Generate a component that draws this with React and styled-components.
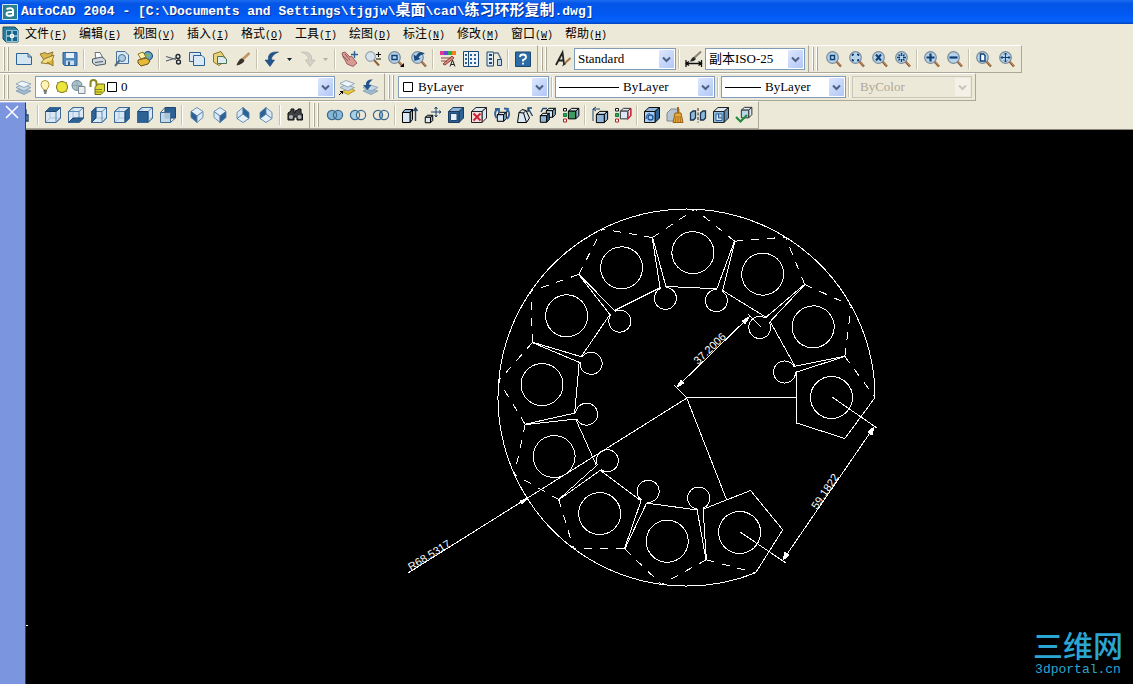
import React from 'react'
import styled, { createGlobalStyle } from 'styled-components'

const GlobalStyle = createGlobalStyle`
* {
    box-sizing: border-box;
}
body {
    margin: 0;
    background: #000;
    overflow: hidden;
}
`

const mono = `"Liberation Mono", "Noto Sans CJK SC", monospace`
const serif = `"Liberation Serif", "Noto Sans CJK SC", serif`

const Container = styled.div`
position: relative;
display: flex;
flex-direction: column;
min-height: 100vh;
background: #ece9d8;
`

const TitleBar = styled.header`
height: 24px;
padding: 0 2px;
display: flex;
align-items: center;
gap: 3px;
background: linear-gradient(#1b6cf0 0%, #0355e6 15%, #0258f2 60%, #0463fb 88%, #0342bd 100%);
`

const Title = styled.h1`
margin: 0;
color: #fff;
font: bold 13px/20px ${mono};
white-space: pre;
text-shadow: 1px 1px 0 #0a2f8c;
`

const Han = styled.span`
font-size: 15px;
line-height: 20px;
`

const MenuBar = styled.nav`
height: 21px;
padding-left: 2px;
display: flex;
align-items: center;
gap: 6px;
`

const MenuList = styled.ul`
margin: 0;
padding: 0;
display: flex;
list-style: none;
`

const MenuItem = styled.li`
width: 54px;
`

const MenuButton = styled.button`
padding: 0;
border: none;
background: none;
color: #000;
font: 12px/18px ${mono};
white-space: nowrap;
`

const Accel = styled.span`
font-size: 10px;
`

const Row = styled.div`
height: 28px;
display: flex;
`

const Toolbar = styled.div`
display: flex;
align-items: center;
padding-right: 3px;
border-top: 1px solid #fff;
border-right: 1px solid #aca899;
border-bottom: 1px solid #aca899;
`

const Grip = styled.span`
width: ${p => p.$first ? 12 : 13}px;
height: 24px;
flex: none;
background:
    linear-gradient(90deg, #fff 1px, #aca899 1px) 3px 0 / 2px 24px no-repeat,
    linear-gradient(90deg, #fff 1px, #aca899 1px) 7px 0 / 2px 24px no-repeat;
`

const Sep = styled.span`
width: 6px;
height: 20px;
flex: none;
background: linear-gradient(90deg, #c5c2b2 1px, #fff 1px) 2px 0 / 2px 20px no-repeat;
`

const ToolButton = styled.button`
width: 23px;
height: 24px;
flex: none;
padding: 0;
border: none;
background: none;
display: flex;
align-items: center;
justify-content: center;
svg {
    display: block;
    overflow: visible;
}
`

const DropButton = styled(ToolButton)`
width: 13px;
`

const ComboBox = styled.label`
width: ${p => p.$width}px;
height: 22px;
flex: none;
display: flex;
align-items: center;
padding: 0 1px 0 3px;
border: 1px solid ${p => p.$off ? '#c9c7ba' : '#7f9db9'};
background: ${p => p.$off ? '#ece9d8' : '#fff'};
svg {
    flex: none;
}
`

const Select = styled.select`
flex: 1;
min-width: 0;
height: 18px;
padding: 0 0 0 ${p => p.$indent || 0}px;
border: none;
outline: none;
appearance: none;
background: transparent;
color: #000;
opacity: 1;
font: 13px/18px ${serif};
&:disabled {
    color: #aca899;
}
`

const Arrow = styled.span`
width: 15px;
height: 18px;
flex: none;
display: flex;
align-items: center;
justify-content: center;
border-radius: 1px;
background: ${p => p.$off ? '#f3f1e8' : 'linear-gradient(135deg, #dde8ff, #b2c6f6)'};
`

const Palette = styled.aside`
position: absolute;
left: 0;
top: 102px;
bottom: 0;
width: 26px;
background: #7b96df;
border-top: 1px solid #a9baf0;
border-right: 1px solid #3a3f52;
`

const CloseButton = styled.button`
display: block;
width: 20px;
height: 20px;
padding: 0 0 0 3px;
border: none;
background: none;
`

const Canvas = styled.main`
flex: 1;
margin-left: 26px;
border-top: 1px solid #8b897c;
position: relative;
display: flex;
background: #000;
`

const Drawing = styled.svg`
display: block;
width: 100%;
flex: 1;
fill: none;
stroke: #fff;
text {
    fill: #fff;
    stroke: none;
    font: 11px "Liberation Sans", sans-serif;
}
`

const Watermark = styled.div`
position: absolute;
right: 10px;
bottom: 7px;
color: #2ba6d3;
text-align: center;
`

const MarkName = styled.div`
font: 500 30px/38px "Noto Sans CJK SC", sans-serif;
`

const MarkSite = styled.div`
font: 13px/14px ${mono};
`

const navy = '#1d4670'
const dark = '#2d6296'
const pale = '#d9e8f4'
const mid = '#8fb6d8'

// small box used by the solids and view tools
const Cube = ({ top = pale, front = pale, side = mid, stroke = navy, x = 0, y = 0, s = 1 }) => (
    <g transform={`translate(${x} ${y}) scale(${s})`} stroke={stroke} strokeWidth={1 / s} strokeLinejoin="round">
        <path d="M.5 4.5L5 .5H15.5L11 4.5Z" fill={top} />
        <path d="M11 4.5L15.5 .5V11L11 15.5Z" fill={side} />
        <path d="M.5 4.5H11V15.5H.5Z" fill={front} />
    </g>
)

// view cube with faint hidden edges
const ViewCube = ({ face }) => (
    <g stroke="#5f8ab0" strokeLinejoin="round">
        <path d="M.5 4.5L5 .5H15.5V11L11 15.5H.5Z" fill={pale} />
        <path d="M5 .5V11H15.5M5 11L.5 15.500" stroke="#a9c6dd" />
        <path d="M.5 4.5H11V15.5M11 4.500L15.500 .5" />
        <path d={face} fill={dark} stroke={navy} />
        <path d="M.5 4.5L5 .5H15.5V11L11 15.5H.5Z" stroke="#3d6b96" />
    </g>
)

const Iso = ({ left = pale, right = pale, flip }) => (
    <g stroke="#4d7aa3" strokeWidth=".8" strokeLinejoin="round" transform={flip ? 'matrix(1 0 0 -1 0 16)' : undefined}>
        <path d="M8 .5L14 4.500L8 9L2 4.500Z" fill="#e6f0f8" />
        <path d="M2 4.500L8 9V15.500L2 10.500Z" fill={left} />
        <path d="M14 4.500L8 9V15.500L14 10.500Z" fill={right} />
    </g>
)

const Mag = ({ children }) => (
    <>
        <path d="M10.5 10.5L15 15.5" stroke="#8d5a33" strokeWidth="2.4" />
        <path d="M11 10.5L15 14.8" stroke="#e2b27c" strokeWidth=".8" />
        <circle cx="6.5" cy="6.5" r="5.8" fill="#b5d3ea" stroke="#7d8b99" strokeWidth="1.2" />
        <g fill="none" stroke="#123f73" strokeWidth="1.4">{children}</g>
    </>
)

const Rings = ({ a, b, lens }) => (
    <>
        <circle cx="5" cy="8" r="4.6" fill={a} />
        <circle cx="11" cy="8" r="4.6" fill={b} />
        <path d="M8 4.4A4.6 4.6 0 0 1 8 11.6A4.6 4.6 0 0 1 8 4.4Z" fill={lens} />
        <g fill="none" stroke="#3d6b8f" strokeWidth="1.2">
            <circle cx="5" cy="8" r="4.6" />
            <circle cx="11" cy="8" r="4.6" />
        </g>
    </>
)

const Sheets = () => (
    <g stroke="#7e98b0" strokeWidth=".8">
        <path d="M0 12L6 9L15 12L8 15.5Z" fill="#9eb9d0" />
        <path d="M0 8.500L6 5.500L15 8.500L8 12Z" fill="#c6d8e6" />
        <path d="M0 5L6 2L15 5L8 8.500Z" fill="#eef4f8" />
    </g>
)

const icons = {
    New: <path d="M.5 2.500H12L15.500 6V13.500H.5Z M12 2.500V6H15.500" fill="#d5e6f3" stroke={dark} />,
    Open: <>
        <path d="M1 3L6 1.500L8 3L14 1L12 6L5 9Z" fill="#d9b84e" stroke="#7d6118" strokeWidth=".8" />
        <path d="M5 8L15 4L12 13L2 12Z" fill="#f3dc82" stroke="#7d6118" strokeWidth=".8" />
        <path d="M8 11L14 15L14 9" fill="#dcb63c" stroke="#7d6118" strokeWidth=".8" />
    </>,
    Save: <>
        <path d="M1 1.500H15V14.500H2.500L1 13Z" fill="#4f86bb" stroke={dark} />
        <path d="M4 2H12V7H4Z" fill="#e5f0f8" />
        <path d="M4 9.500H12V14H4Z" fill="#cddfee" /><path d="M6 10.500H8V14H6Z" fill={dark} />
    </>,
    Plot: <>
        <path d="M4 1.500H9L12 7L5 8Z" fill="#fff" stroke="#66717d" />
        <path d="M1.500 8L11 6L14.500 9V13L5 14.500L1.500 12Z" fill="#cfd6dd" stroke="#4e5a66" />
        <path d="M4 11.500L12 10.500" stroke="#4e5a66" />
    </>,
    Preview: <>
        <path d="M2.500 .5H11L14.500 4V12.500H2.500Z" fill="#dbe9f4" stroke="#4a7096" />
        <circle cx="8" cy="7" r="3.500" fill="#aecde4" stroke="#4a7096" />
        <path d="M5.500 9.500L1 15" stroke="#566b7e" strokeWidth="2" />
    </>,
    Publish: <>
        <circle cx="11" cy="5" r="4.500" fill="#5d9ccc" stroke={navy} /><path d="M8 4Q11 1 14 4L11 7Z" fill="#7cb56e" />
        <path d="M1 3L6 1L9 6L4 8Z" fill="#fff3a9" stroke="#8c7420" />
        <path d="M1 9L9 7L13 10L11 13L4 15L1 12Z" fill="#e4b93a" stroke="#6e5614" />
    </>,
    Cut: <>
        <path d="M0 5.500L10 8.500M0 10L10 7" stroke="#57626e" strokeWidth="1.300" />
        <g fill="none" stroke="#20262d" strokeWidth="1.300"><circle cx="12" cy="5.500" r="2" /><circle cx="12.500" cy="11" r="2" /></g>
    </>,
    Copy: <g fill="#dbe9f4" stroke={dark}>
        <path d="M.5 1.500H11.500V10.500H.5Z" /><path d="M4.500 4.500H13L15.500 7V14.500H4.500Z" />
    </g>,
    Paste: <>
        <path d="M1.500 3L9 .5L14.500 9L7 14.500L1.500 11Z" fill="#e8d37b" stroke="#8a7428" />
        <path d="M5.500 5.500H11L14.500 8V12.500H5.500Z" fill="#dceaf2" stroke="#4d7551" />
    </>,
    Match: <>
        <path d="M8 8L14.500 2" stroke="#c29560" strokeWidth="2.600" />
        <path d="M1.500 14.500Q3 9 7 7L9.500 9.500Q8 13 1.500 14.500Z" fill="#3a3028" />
    </>,
    Undo: <path d="M14.500 1Q3 0 4.500 9H1L6 15.500L10.500 9H7.500Q7 4 14.500 1Z" fill="#23548c" stroke={navy} strokeWidth=".6" />,
    Redo: <path d="M1.500 1Q13 0 11.500 9H15L10 15.500L5.500 9H8.500Q9 4 1.500 1Z" fill="#d4d2c8" stroke="#b3b1a6" strokeWidth=".6" />,
    Pan: <>
        <path d="M0 2L3 1L8 6L9.500 5L15 12L11 15.500L5 13L3 9L1 6Z" fill="#d79a94" stroke="#854a48" strokeWidth=".8" />
        <path d="M3 3L8 9M1 5L6 10" stroke="#854a48" strokeWidth=".8" />
        <path d="M12.500 0V7M9 3.500H16" stroke={dark} strokeWidth="1.400" />
    </>,
    Realtime: <>
        <path d="M9 9L14 14.500" stroke="#8d6238" strokeWidth="2" />
        <circle cx="5.500" cy="5.500" r="4.800" fill="#d6e3ec" stroke="#7d8b99" />
        <path d="M13.500 1V6M11 3.500H16M11 8H16" stroke="#111" />
    </>,
    Window: <>
        <Mag><path d="M4 4.500H9V8.500H4Z" /></Mag>
        <path d="M16 12V16H12Z" fill="#000" />
    </>,
    Previous: <>
        <Mag />
        <path d="M14 3Q9 -2 5 5L2.500 3.500L3.500 10L9.500 8L7.500 6.500Q9.500 3 14 3Z" fill="#1c4a80" />
    </>,
    Properties: <>
        <path d="M0 0H4V4H0Z" fill="#e03a8c" /><path d="M4 0H8V4H4Z" fill="#6a45d8" /><path d="M8 0H12V4H8Z" fill="#25b24a" /><path d="M12 0H16V4H12Z" fill="#f08020" />
        <path d="M1 7H11M1 10H7M3 13L12 5L14 7L5 14Z" stroke="#904038" fill="#d88c84" />
        <path d="M10 15.500L12.500 9L15 15.500M11 13.500H14" fill="none" stroke="#222" />
    </>,
    Center: <>
        <path d="M.5 .5H15.500V15.500H.5Z" fill="#edf4f9" stroke={navy} />
        <path d="M5.500 1V15" stroke={navy} />
        <path d="M2 3H4V5H2ZM2 7H4V9H2ZM2 11H4V13H2ZM7 3H9V5H7ZM11 3H13V5H11ZM7 7H9V9H7ZM11 7H13V9H11ZM7 11H9V13H7ZM11 11H13V13H11Z" fill={dark} />
    </>,
    Palettes: <>
        <path d="M1 1H7.500V15H1Z" fill="#dfebf4" stroke={navy} /><path d="M3 4H6M3 8H6M3 12H6" stroke={navy} strokeWidth="2" />
        <path d="M7 2H12L15 8" fill="none" stroke="#5c7791" strokeWidth="1.500" /><path d="M11.500 8.500H15.500V14.500H11.500Z" fill="#bdd6ea" stroke={navy} />
    </>,
    Help: <>
        <path d="M.5 1H15.500V15.500H.5Z" fill="#2d6ba6" stroke={navy} />
        <path d="M5 6Q5 3.500 8 3.500Q11 3.500 11 6Q11 8 8 9V10.500M8 11.800V13.500" fill="none" stroke="#fff" strokeWidth="1.800" />
    </>,
    TextStyle: <>
        <path d="M1 14L7.500 1.500L9 13M3.500 9.500H8.500" fill="none" stroke="#222" strokeWidth="1.800" />
        <path d="M9 13L15.500 7" stroke="#a5743d" strokeWidth="2" /><path d="M7 15.500L9 11.500L11 13Z" fill="#222" />
    </>,
    DimStyle: <>
        <path d="M0 9V16M15.500 9V16M1 12.500H15M3 10.500L0 12.500L3 14.500M12.500 10.500L15.500 12.500L12.500 14.500" fill="none" stroke="#111" strokeWidth="1.300" />
        <path d="M7 8L15 .5" stroke="#8a8576" strokeWidth="2" /><path d="M4 10.500Q6 6 8 6L10 8Q8 11 4 10.500Z" fill="#2b2b2b" />
    </>,
    ZoomWindow: <Mag><path d="M4.500 4.500H8.500V8.500H4.500Z" /></Mag>,
    ZoomDynamic: <Mag><path d="M3.500 5V3.500H5M8 3.500H9.500V5M9.500 8V9.500H8M5 9.500H3.500V8" /></Mag>,
    ZoomScale: <Mag><path d="M4 3.500L9 9.500M9 3.500L4 9.500" strokeWidth="2" /></Mag>,
    ZoomCenter: <Mag><path d="M6.500 2V5M6.500 8V11M2 6.500H5M8 6.500H11M3.500 3.500L5 5M9.500 9.500L8 8M9.500 3.500L8 5M3.500 9.500L5 8" /></Mag>,
    ZoomIn: <Mag><path d="M6.500 2.500V10.500M2.500 6.500H10.500" strokeWidth="2.200" /></Mag>,
    ZoomOut: <Mag><path d="M2.500 6.500H10.500" strokeWidth="2.200" /></Mag>,
    ZoomAll: <Mag><path d="M4.500 3H7.500L9 4.500V10H4.500Z" fill="#fff" /></Mag>,
    ZoomExtents: <Mag><path d="M6.500 2V11M2 6.500H11M5 3.500L6.500 2L8 3.500M5 9.500L6.500 11L8 9.500M3.500 5L2 6.500L3.500 8M9.500 5L11 6.500L9.500 8" strokeWidth="1" /></Mag>,
    Layers: <Sheets />,
    LayerCurrent: <>
        <path d="M3 12.500L11 9L16 11.500L9 15.500Z" fill="#edc83a" stroke="#a08420" strokeWidth=".8" />
        <g stroke="#7e98b0" strokeWidth=".8">
            <path d="M1 8.500L7 5.500L15.500 8.500L9 12Z" fill="#c6d8e6" />
            <path d="M1 4.500L7 1.500L15.500 4.500L9 8Z" fill="#eef4f8" />
        </g>
        <path d="M0 16L3.500 12.500M1 12.500H3.500V15" fill="none" stroke="#000" />
    </>,
    LayerPrevious: <>
        <path d="M1 12L7 9L16 12L9 15.500Z" fill="#9eb9d0" stroke="#7e98b0" strokeWidth=".8" />
        <path d="M1 8.500L7 5.500L16 8.500L9 12Z" fill="#c6d8e6" stroke="#7e98b0" strokeWidth=".8" />
        <path d="M11 .5Q3.500 0 4 6H1L5.500 11L9.500 6H7Q7 3 11 .5Z" fill="#23548c" />
    </>,
    Named: <path d="M1 3H10V13H1ZM3 8H12V14H3Z" fill="#a9cbe2" stroke={navy} strokeWidth="1.400" />,
    Top: <ViewCube face="M.5 4.500L5 .5H15.500L11 4.500Z" />,
    Bottom: <ViewCube face="M.5 15.500L5 11H15.500L11 15.500Z" />,
    Left: <ViewCube face="M.5 4.500L5 .5V11L.5 15.500Z" />,
    Right: <ViewCube face="M11 4.500L15.500 .5V11L11 15.500Z" />,
    Front: <ViewCube face="M.5 4.500H11V15.500H.5Z" />,
    Back: <>
        <path d="M5 .5H15.500V11H5Z" fill={dark} stroke={navy} />
        <path d="M.5 5.500H10.500V15.500H.5Z" fill="#bdd5e9" fillOpacity=".85" stroke="#456c93" />
        <path d="M.5 5.500L5 .5M10.500 15.500L15.500 11" stroke="#456c93" />
    </>,
    SW: <Iso left={dark} />,
    SE: <Iso right={dark} />,
    NE: <Iso right={dark} flip />,
    NW: <Iso left={dark} flip />,
    Camera: <>
        <path d="M1 12V6L4 4V2H7V6H8V4L11 3V2H14V6L15.500 7V13H10V10H7V13H1Z" fill="#3f4144" stroke="#111" />
        <circle cx="4" cy="10" r="2" fill="#aeb4b9" /><circle cx="12.500" cy="10" r="2" fill="#aeb4b9" />
    </>,
    Union: <Rings a="#86b8d6" b="#86b8d6" lens="#86b8d6" />,
    Subtract: <Rings a="#a9cfe3" b="none" lens="#ece9d8" />,
    Intersect: <Rings a="none" b="none" lens="#86b8d6" />,
    Extrude: <>
        <path d="M.5 5.500L3 2.500H10.500L8 5.500ZM8 5.500L10.500 2.500V12.500L8 15.500Z" fill={mid} stroke="#000" />
        <path d="M.5 5.500H8V15.500H.5Z" fill={pale} stroke="#000" />
        <path d="M13.500 14V2M11.500 4L13.500 1L15.500 4" fill="none" stroke={navy} strokeWidth="1.400" />
    </>,
    MoveFaces: <>
        <Cube stroke="#000" y={8} s={.5} /><path d="M11 0V10M6 5H16M9.500 2L11 0L12.500 2M9.500 8L11 10L12.500 8M14 3.500L16 5L14 6.500" fill="none" stroke={navy} />
    </>,
    Offset: <><Cube stroke="#1d3a5c" top={mid} front={dark} side={dark} /><path d="M2.500 6.500H9V13.500H2.500Z" fill="#e6f0f8" stroke={navy} /></>,
    Delete: <><Cube stroke="#222" front="#f2dede" side={pale} /><path d="M2.500 6.500L9.500 13.500M9.500 6.500L2.500 13.500" stroke="#cc2233" strokeWidth="2" /></>,
    Rotate: <>
        <Cube stroke="#000" x={3} y={5} s={.6} />
        <path d="M2.500 11Q-1 5 4 2M13 2Q17.500 7 13 12M1 2H5V6M10 1.500L14 2L12.500 5" fill="none" stroke={dark} strokeWidth="1.800" />
    </>,
    Taper: <>
        <path d="M.5 15.500L2 5.500L5 2.500L9 3.500L12.500 11L9.500 15.500ZM2 5.500L6.500 6L9.500 15.500M6.500 6L9 3.500" fill={pale} stroke="#000" />
        <path d="M11 1L15.500 9M11 5V1H15" fill="none" stroke={navy} strokeWidth="1.400" />
    </>,
    CopyFaces: <>
        <Cube stroke="#000" x={6} y={1} s={.6} /><Cube stroke="#000" front={mid} side={dark} y={6} s={.6} />
        <path d="M1 5L3 1.500H7" fill="none" stroke={navy} strokeWidth="1.400" />
    </>,
    ColorFaces: <>
        <Cube stroke="#000" front="#3f9a62" x={5} y={1} s={.7} />
        <path d="M.5 1.500H3.500V4H.5Z" fill="#fff" stroke="#111" /><path d="M.5 6.500H3.500V9.500H.5Z" fill="#3a3" stroke="#174" /><path d="M.5 12H3.500V15H.5Z" fill="#fff" stroke="#a22" />
    </>,
    CopyEdges: <><Cube stroke="#000" front={mid} x={4} y={4} s={.75} /><path d="M1 14V2M1 2H8M4 0L1 2L4 4" fill="none" stroke={navy} /></>,
    ColorEdges: <>
        <Cube stroke="#333" x={5} y={1} s={.7} side={pale} /><path d="M12.800 4.500V12L15.800 8.500V1.500" stroke="#d23" strokeWidth="1.200" fill="none" />
        <path d="M.5 1.500H3.500V4H.5Z" fill="#fff" stroke="#111" /><path d="M.5 6.500H3.500V9.500H.5Z" fill="#3a3" stroke="#174" /><path d="M.5 12H3.500V15H.5Z" fill="#fff" stroke="#a22" />
    </>,
    Imprint: <><Cube stroke="#111" front="#a9cdf0" side={dark} top={mid} /><circle cx="6.500" cy="10.500" r="2.500" fill="none" stroke="#1b559c" strokeWidth="1.400" /><path d="M2 12Q2 7 6 6.500" fill="none" stroke="#1b559c" /></>,
    Clean: <>
        <path d="M0 6L4 2H12V14H0Z" fill="#b8c4cf" stroke="#7d8892" /><path d="M10 0H12V6H10Z" fill="#9c6a26" />
        <path d="M8 6H14L16 15.500H6Z" fill="#e8a83c" stroke="#9a6212" /><path d="M9 9L8.500 15M11 9V15M13 9L13.500 15" stroke="#9a6212" strokeWidth=".8" />
    </>,
    Separate: <>
        <path d="M.5 6L3 4H5.500V11L3.500 13H.5ZM10.500 6L13 4H15.500V11L13.500 13H10.500Z" fill="#8db9dc" stroke="#1c3550" strokeWidth="1.300" />
        <path d="M8 1V15.500" stroke="#222" strokeDasharray="3 1.500" />
    </>,
    Shell: <><Cube stroke="#222" front={mid} side="#5f91ba" /><path d="M3 7H9V13.500H3ZM5.500 7V11H9" fill={pale} stroke={dark} /></>,
    Check: <><Cube stroke="#333" side={pale} front="#b7d6ea" x={5} y={0} s={.7} /><path d="M0 10L4.500 14.500L11 8" fill="none" stroke="#238a3f" strokeWidth="2.200" /></>,
}

const Icon = ({ name }) => (
    <svg width="16" height="16" viewBox="0 0 16 16" fill="none" aria-hidden="true">{icons[name]}</svg>
)

// '|' is a separator, '>' a small drop-down arrow
const Tools = ({ names }) => names.split(' ').map((n, i, all) => {
    if (n === '|') return <Sep key={i} />
    if (n === '>') {
        return (
            <DropButton key={i} aria-label="More">
                <svg width="5" height="3"><path d="M0 0H5L2.500 3Z" fill={all[i - 1] === 'Undo' ? '#123' : '#b3b1a6'} /></svg>
            </DropButton>
        )
    }
    return <ToolButton key={i} aria-label={n}><Icon name={n} /></ToolButton>
})

const Combo = ({ label, width, value, indent, off, children }) => (
    <ComboBox $width={width} $off={off}>
        {children}
        <Select aria-label={label} $indent={indent} disabled={off}>
            <option>{value}</option>
        </Select>
        <Arrow $off={off}>
            <svg width="9" height="7" fill="none"><path d="M1 1.500L4.500 5L8 1.500" stroke={off ? '#c9c7ba' : '#4d6185'} strokeWidth="2" /></svg>
        </Arrow>
    </ComboBox>
)

const Swatch = () => <svg width="12" height="12"><path d="M1.500 1.500H10.500V10.500H1.500Z" fill="#fff" stroke="#000" /></svg>

const Line = ({ width }) => <svg width={width} height="3"><path d={`M0 1.500H${width}`} stroke="#000" /></svg>

const LayerState = () => (
    <svg width="67" height="16" fill="none">
        <path d="M5 11Q2 8 2 5.500Q2 1.500 6 1.500Q10 1.500 10 5.500Q10 8 7.500 11Z" fill="#fdf6b8" stroke="#b5973a" />
        <path d="M4.500 12H8M5 14H7.500" stroke="#555" strokeWidth="1.300" />
        <path d="M18 3L28 13M28 3L18 13" stroke="#a28d1c" />
        <circle cx="23" cy="8" r="5.500" fill="#ece63b" stroke="#7a7218" />
        <circle cx="38" cy="6.500" r="5" fill="#a9c4cf" stroke="#68838f" />
        <path d="M38 1.500V12M33 6.500H43" stroke="#8ba5b0" />
        <path d="M39.500 7.500H46V14.500H39.500Z" fill="#e9eef0" stroke="#7e8b92" />
        <path d="M51.500 8V4Q51.500 1 54.500 1Q57.500 1 57.500 4V9" stroke="#8b861d" strokeWidth="2" />
        <path d="M56 8.500L59 5H65.500V12L62 15.500H56Z" fill="#ded93a" stroke="#6f6a10" />
        <path d="M56 10.500H63M56 13H63" stroke="#6f6a10" strokeWidth=".8" />
    </svg>
)

const menus = [
    ['文件', 'F'], ['编辑', 'E'], ['视图', 'V'], ['插入', 'I'], ['格式', 'O'], ['工具', 'T'],
    ['绘图', 'D'], ['标注', 'N'], ['修改', 'M'], ['窗口', 'W'], ['帮助', 'H'],
]

const STEP = 29.15
const parts = Array.from({ length: 11 }, (_, i) => i)

const Part = ({ index }) => (
    <g transform={`rotate(${-STEP * index})`}>
        <path d="M158.400 -41L110 -25.500V25.500L158.400 41" />
        <path d="M158.400 -41L188.500 0" strokeDasharray={index === 10 ? undefined : '8 8'} />
        <path d="M158.400 41L188.500 0" strokeDasharray={index === 0 ? undefined : '8 8'} />
        <circle cx="145" cy="0" r="21" />
    </g>
)

const Plan = () => (
    <Drawing viewBox="26 130 1107 554" preserveAspectRatio="xMidYMid meet" shapeRendering="crispEdges">
        <g transform="translate(686.500 397.500)">
            {parts.map(i => <Part key={i} index={i} />)}
            {parts.slice(1).map(i => (
                <path key={i} transform={`rotate(${-STEP * (i - 0.5)})`} d="M112 -2.700A11 11 0 1 0 112 2.700" />
            ))}
            <path d="M188.500 0A188.500 188.500 0 1 0 69.100 175.400" />
            <path d="M0 0H110M0 0L40 102" />
        </g>
        {/* radius */}
        <path d="M687 398L408 573" />
        <path d="M528 498L520 501L522 504Z" fill="#fff" />
        <text transform="translate(411 571) rotate(-32)">R68.5317</text>
        {/* inner distance */}
        <path d="M687 398L674 385M761 327L748 314M677 387L749 317" />
        <path d="M749 317L742 321L745 324ZM677 387L681 380L684 383Z" fill="#fff" />
        <text transform="translate(698 365) rotate(-44)">37.2006</text>
        {/* distance between the end parts */}
        <path d="M832 397L877 428M740 532L786 563M874 427L783 560" />
        <path d="M874 427L868 432L872 435ZM783 560L785 552L789 555Z" fill="#fff" />
        <text transform="translate(817 510) rotate(-56)">59.1822</text>
        <path d="M26 625.500H28" />
    </Drawing>
)

function App() {
    return (
        <Container>
            <GlobalStyle />
            <TitleBar>
                <svg width="16" height="18" viewBox="0 0 16 18" fill="none">
                    <path d="M.5 1.500H15.500V16.500H.5Z" fill="#2c8093" stroke="#d5e8ec" />
                    <path d="M4.500 6Q11 4 11 7.500V13M11 9Q4.500 8.500 4.500 11Q5 14 11 12" stroke="#fff" strokeWidth="2" />
                </svg>
                <Title>
                    {'AutoCAD 2004 - [C:\\Documents and Settings\\tjgjw\\'}<Han>桌面</Han>{'\\cad\\'}<Han>练习环形复制</Han>.dwg]
                </Title>
            </TitleBar>
            <MenuBar>
                <svg width="17" height="17" fill="none">
                    <path d="M1 1H13L16 4V16H4L1 13Z" fill="#2a7f9c" stroke="#1b4f70" />
                    <path d="M4.500 4.500H15.500V15.500H4.500Z" fill="#14658a" stroke="#8ac1d6" />
                    <path d="M10 5V15M5 10H15" stroke="#fff" /><path d="M8.500 8.500H11.500V11.500H8.500Z" stroke="#fff" />
                </svg>
                <MenuList>
                    {menus.map(([name, key]) => (
                        <MenuItem key={key}>
                            <MenuButton>{name}<Accel>(<u>{key}</u>)</Accel></MenuButton>
                        </MenuItem>
                    ))}
                </MenuList>
            </MenuBar>
            <Row>
                <Toolbar>
                    <Grip $first />
                    <Tools names="New Open Save | Plot Preview Publish | Cut Copy Paste Match | Undo > Redo > | Pan Realtime Window Previous | Properties Center Palettes | Help" />
                </Toolbar>
                <Toolbar>
                    <Grip />
                    <Tools names="TextStyle" />
                    <Combo label="Text style" width={102} value="Standard" />
                    <Sep />
                    <Tools names="DimStyle" />
                    <Combo label="Dimension style" width={100} value="副本ISO-25" />
                </Toolbar>
                <Toolbar>
                    <Grip />
                    <Tools names="ZoomWindow ZoomDynamic ZoomScale ZoomCenter | ZoomIn ZoomOut | ZoomAll ZoomExtents" />
                </Toolbar>
            </Row>
            <Row>
                <Toolbar>
                    <Grip $first />
                    <Tools names="Layers" />
                    <Combo label="Layer" width={300} value="0" indent={3}>
                        <LayerState />
                        <Swatch />
                    </Combo>
                    <Tools names="LayerCurrent LayerPrevious" />
                </Toolbar>
                <Toolbar>
                    <Grip />
                    <Combo label="Color" width={151} value="ByLayer" indent={4}><Swatch /></Combo>
                    <Sep />
                    <Combo label="Linetype" width={160} value="ByLayer" indent={4}><Line width={60} /></Combo>
                    <Sep />
                    <Combo label="Lineweight" width={125} value="ByLayer" indent={4}><Line width={36} /></Combo>
                    <Sep />
                    <Combo label="Plot style" width={120} value="ByColor" indent={4} off />
                </Toolbar>
            </Row>
            <Row>
                <Toolbar>
                    <Grip $first />
                    <Tools names="Named | Top Bottom Left Right Front Back | SW SE NE NW | Camera" />
                </Toolbar>
                <Toolbar>
                    <Grip />
                    <Tools names="Union Subtract Intersect | Extrude MoveFaces Offset Delete Rotate Taper CopyFaces ColorFaces | CopyEdges ColorEdges | Imprint Clean Separate Shell Check" />
                </Toolbar>
            </Row>
            <Canvas>
                <Plan />
                <Watermark>
                    <MarkName>三维网</MarkName>
                    <MarkSite>3dportal.cn</MarkSite>
                </Watermark>
            </Canvas>
            <Palette>
                <CloseButton aria-label="Close">
                    <svg width="14" height="14"><path d="M1 1L13 13M13 1L1 13" stroke="#fff" strokeWidth="1.500" /></svg>
                </CloseButton>
            </Palette>
        </Container>
    )
}

export default App
